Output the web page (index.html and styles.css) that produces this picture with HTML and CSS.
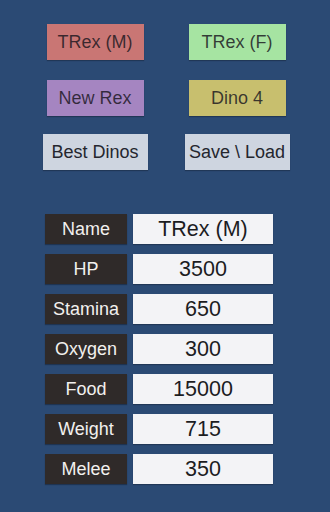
FILE: index.html
```html
<!DOCTYPE html>
<html lang="en">

<head>
    <meta charset="UTF-8">
    <meta name="viewport" content="width=device-width, initial-scale=1.0">
    <title>Dino Stats</title>
    <link rel="stylesheet" href="styles.css">
</head>

<body>
    <div class="btn-grid">
        <div class="btn male">TRex (M)</div>
        <div class="btn female">TRex (F)</div>
        <div class="btn newrex">New Rex</div>
        <div class="btn dino4">Dino 4</div>
        <div class="btn wide">Best Dinos</div>
        <div class="btn wide">Save \ Load</div>
    </div>

    <div class="stats">
        <div class="label">Name</div>
        <div class="value">TRex (M)</div>
        <div class="label">HP</div>
        <div class="value">3500</div>
        <div class="label">Stamina</div>
        <div class="value">650</div>
        <div class="label">Oxygen</div>
        <div class="value">300</div>
        <div class="label">Food</div>
        <div class="value">15000</div>
        <div class="label">Weight</div>
        <div class="value">715</div>
        <div class="label">Melee</div>
        <div class="value">350</div>
    </div>
</body>

</html>
```

FILE: styles.css
```css
body {
    margin: 0;
    background: #2b4a74;
    font-family: "Liberation Sans", Arial, sans-serif;
    height: 512px;
    overflow: hidden;
}

.btn-grid {
    display: grid;
    grid-template-columns: 142px 142px;
    grid-auto-rows: 36px;
    row-gap: 20px;
    justify-items: center;
    padding: 24px 0 0 24px;
}

.btn {
    width: 97px;
    height: 36px;
    display: flex;
    align-items: center;
    justify-content: center;
    font-size: 18px;
    color: rgba(25, 22, 30, 0.82);
    box-shadow: 0 1px 1px rgba(0, 0, 0, 0.25);
}

.male {
    background: #c97674;
}

.female {
    background: #a6e4a2;
}

.newrex {
    background: #a585c1;
}

.dino4 {
    background: #c8bf6e;
}

.btn.wide {
    width: 105px;
    margin-top: -2px;
    background: #ced5e0;
    color: #24262e;
}

.stats {
    display: grid;
    grid-template-columns: 82px 140px;
    grid-auto-rows: 30px;
    column-gap: 6px;
    row-gap: 10px;
    padding: 42px 0 0 45px;
}

.label {
    background: #2f2a29;
    color: #f2f0ee;
    font-size: 18px;
    display: flex;
    align-items: center;
    justify-content: center;
    box-shadow: 0 1px 1px rgba(0, 0, 0, 0.3);
}

.value {
    background: #f3f3f6;
    color: #1c1c1f;
    font-size: 21.5px;
    display: flex;
    align-items: center;
    justify-content: center;
    box-shadow: 0 1px 1px rgba(0, 0, 0, 0.25);
}
```
